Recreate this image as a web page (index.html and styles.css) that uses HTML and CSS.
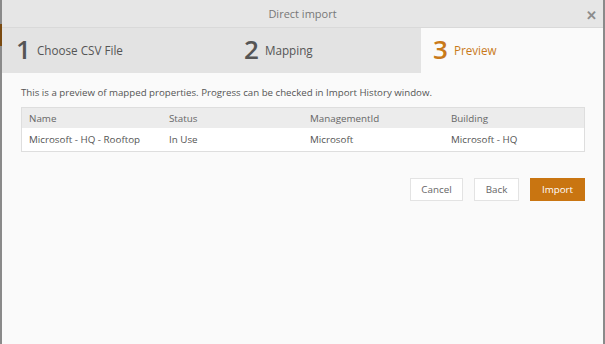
FILE: index.html
```html
<!DOCTYPE html>
<html lang="en">
<head>
  <meta charset="UTF-8">
  <title>Direct import</title>
  <link rel="stylesheet" href="styles.css">
</head>
<body>
  <div class="frame">
    <div class="edge left"><span class="edge-mark"></span></div>
    <div class="dialog">
      <div class="titlebar">
        <span class="title">Direct import</span>
        <span class="close">&#x2715;</span>
      </div>
      <div class="steps">
        <div class="step"><span class="num">1</span><span class="step-label">Choose CSV File</span></div>
        <div class="step"><span class="num">2</span><span class="step-label">Mapping</span></div>
        <div class="step active"><span class="num">3</span><span class="step-label">Preview</span></div>
      </div>
      <div class="content">
        <p class="hint">This is a preview of mapped properties. Progress can be checked in Import History window.</p>
        <table class="preview">
          <thead>
            <tr><th>Name</th><th>Status</th><th>ManagementId</th><th>Building</th></tr>
          </thead>
          <tbody>
            <tr><td>Microsoft - HQ - Rooftop</td><td>In Use</td><td>Microsoft</td><td>Microsoft - HQ</td></tr>
          </tbody>
        </table>
        <div class="actions">
          <button class="btn cancel">Cancel</button>
          <button class="btn back">Back</button>
          <button class="btn primary">Import</button>
        </div>
      </div>
    </div>
    <div class="edge right"></div>
  </div>
</body>
</html>
```

FILE: styles.css
```css
html, body {
  margin: 0;
  height: 100%;
}
body {
  font-family: 'Open Sans', 'Noto Sans', sans-serif;
  color: #555;
  background: #fafafa;
}
.frame {
  display: flex;
  height: 344px;
}
.edge {
  width: 2px;
  background: #8a8a8a;
}
.edge-mark {
  display: block;
  margin-top: 24px;
  height: 22px;
  background: #7a4a10;
}
.dialog {
  flex: 1;
  display: flex;
  flex-direction: column;
  background: #fafafa;
}
.titlebar {
  height: 28px;
  display: flex;
  align-items: center;
  justify-content: center;
  position: relative;
  background: #e6e6e6;
  border-bottom: 1px solid #d9d9d9;
  box-sizing: border-box;
}
.title {
  font-size: 11px;
  color: #777;
}
.close {
  position: absolute;
  right: 6px;
  top: 6px;
  font-size: 13px;
  font-weight: bold;
  color: #8c8c8c;
}
.steps {
  display: grid;
  grid-template-columns: 228px 191px 1fr;
  height: 45px;
  background: #e3e3e3;
}
.step {
  display: flex;
  align-items: center;
  padding-left: 14px;
  padding-bottom: 3px;
  color: #555;
}
.step .num {
  font-size: 26px;
  font-weight: 600;
  margin-right: 6px;
  line-height: 1;
}
.step-label {
  font-size: 11.7px;
  margin-top: 1px;
}
.step.active {
  background: #fafafa;
  padding-left: 12px;
  color: #c97a1a;
}
.content {
  padding: 0 18px 0 19px;
}
.hint {
  font-size: 9.7px;
  margin: 13px 0 8px;
  color: #555;
}
.preview {
  width: 100%;
  border-collapse: collapse;
  border: 1px solid #dedede;
  font-size: 9.8px;
}
.preview th {
  background: #ececec;
  font-weight: normal;
  text-align: left;
  color: #666;
  height: 20px;
  padding: 0 7px;
}
.preview td {
  background: #fff;
  height: 23px;
  padding: 0 7px;
}
.preview th:nth-child(1), .preview td:nth-child(1) { width: 126px; }
.preview th:nth-child(2), .preview td:nth-child(2) { width: 127px; }
.preview th:nth-child(3), .preview td:nth-child(3) { width: 127px; }
.actions {
  display: flex;
  justify-content: flex-end;
  gap: 11px;
  margin-top: 26px;
}
.btn {
  font-family: inherit;
  font-size: 9.8px;
  color: #666;
  background: #fff;
  border: 1px solid #e3e3e3;
  height: 23px;
  padding: 0;
}
.btn.cancel { width: 53px; }
.btn.back { width: 45px; }
.btn.primary {
  width: 55px;
  background: #c97511;
  border-color: #c97511;
  color: #fff;
}
```
